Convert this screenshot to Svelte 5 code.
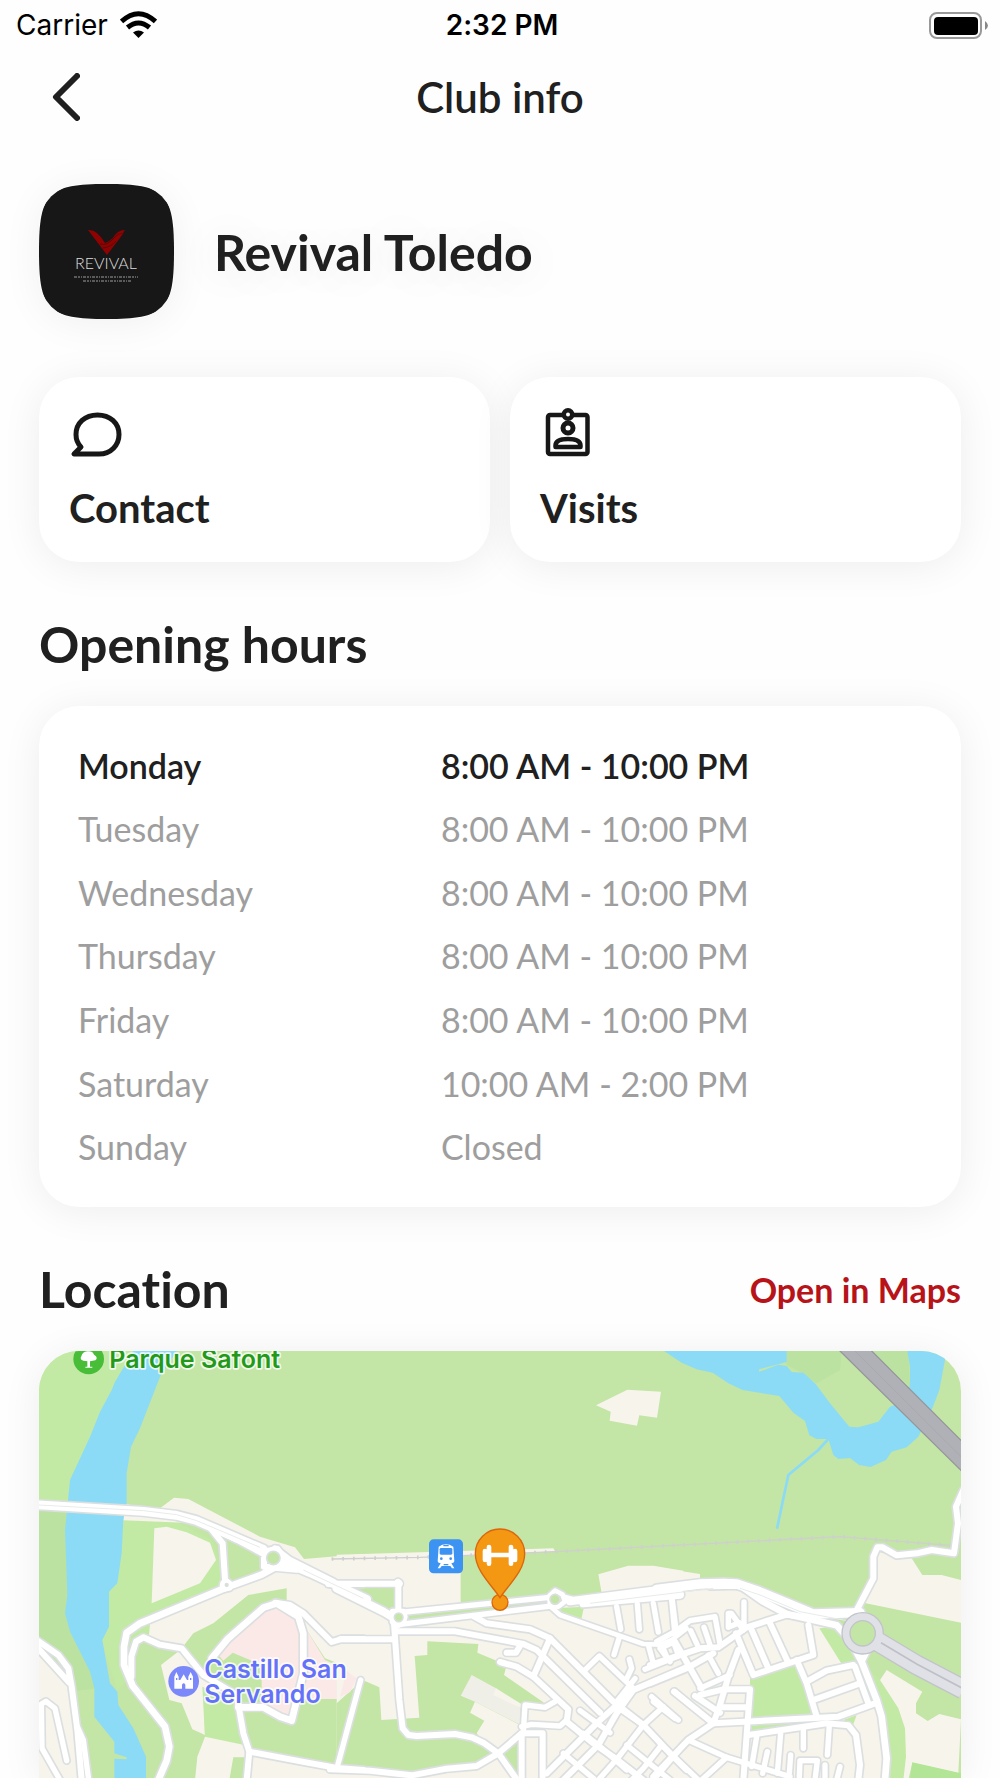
<script>
	const days = [
		{ name: 'Monday', hours: '8:00 AM - 10:00 PM' },
		{ name: 'Tuesday', hours: '8:00 AM - 10:00 PM' },
		{ name: 'Wednesday', hours: '8:00 AM - 10:00 PM' },
		{ name: 'Thursday', hours: '8:00 AM - 10:00 PM' },
		{ name: 'Friday', hours: '8:00 AM - 10:00 PM' },
		{ name: 'Saturday', hours: '10:00 AM - 2:00 PM' },
		{ name: 'Sunday', hours: 'Closed' }
	];
	let today = 'Monday';

	// The map is cut in three tiles, every path is relative to the left of its tile
	const tiles = [
		{
			x: 0,
			areas: [
				{ type: 'meadow', d: 'M27 33H310L120 420V490L27 480Z' },
				{ type: 'wood', d: 'M27 505H120V800L200 1045L140 1052L115 985L27 900Z' },
				{
					type: 'meadow',
					d: 'M270 540L440 545L545 600L590 740L357 850V890L320 900L300 1010L262 1050L215 900V755Z'
				},
				{ type: 'land', d: 'M280 490L340 503H392L432 473L475 477L690 590L795 622L822 657L735 684L500 550L280 541Z' },
				{ type: 'park', d: 'M560 575L735 640L695 700L590 740Z' },
				{
					type: 'land',
					d: 'M357 885L360 850L590 742L735 684L740 640L822 657L1000 642V1000L885 955L830 870L770 800V745L655 765L550 850L490 880L465 912L455 925L357 905Z'
				},
				{ type: 'park', d: 'M940 735H1000V775Z' },
				{ type: 'land', d: 'M373 565L410 560L470 577L540 608L558 660L510 730L365 790Z' },
				{
					type: 'land',
					d: 'M393 975L440 938L460 925L520 1005L620 1065L520 1050L525 1185L487 1168L455 1090L418 1080Z'
				},
				{ type: 'meadow', d: 'M517 1040L625 1090L645 1215L525 1190Z' },
				{ type: 'land', d: 'M525 1190L658 1218V1252H610L598 1320H495L502 1250Z' },
				{ type: 'land', d: 'M658 1240L1000 1300V1320H645Z' },
				{ type: 'land', d: 'M27 930L118 1028L155 1320H27Z' },
				{
					type: 'castle',
					d: 'M565 945L592 905L700 812L740 800L805 835L830 870L885 960L985 1005V1040L945 1077H800L780 1135L695 1090V975L608 938L580 962Z'
				},
				{
					type: 'water',
					d: 'M310 33H440L390 110L330 265L303 320L290 400V490L280 540L275 640L262 730L237 755V860L217 900L240 1030L262 1055L265 1095L310 1165L348 1250V1320H253V1256L290 1258V1252L253 1240V1205L193 1130V1045L180 995L120 875L105 820L112 765L105 570L120 420L180 290L210 215L245 150L255 125Z'
				}
			],
			roads: [
				{ w: 26, d: 'M0 493L340 514L440 526L500 542L700 628' },
				{ w: 26, d: 'M770 668L840 698L1010 778' },
				{ w: 16, d: 'M560 570L620 600L695 640' },
				{ w: 18, d: 'M540 562L578 610L586 732' },
				{ w: 18, d: 'M735 625L780 660L910 725' },
				{
					w: 20,
					d: 'M800 688L735 682L695 704L590 742L330 850L290 878L282 920V975L308 1038L405 1160L418 1220L410 1262L385 1320'
				},
				{
					w: 18,
					d: 'M304 1010V950L318 905L340 892L390 914L455 925L520 1005L620 1065L640 1180L658 1235L650 1320'
				},
				{
					w: 20,
					d: 'M545 955L592 898L700 803L740 790L805 830L820 880V1000L785 1142L750 1130L700 1102H625'
				},
				{ w: 18, d: 'M735 788L780 795L820 820L905 906L935 897H1000' },
				{ w: 18, d: 'M658 1235L800 1262L920 1284L1000 1290' },
				{ w: 16, d: 'M922 1280L992 1020' },
				{ w: 18, d: 'M20 900L85 945L115 985L125 1040L142 1170L155 1320M20 920L118 1028' },
				{ w: 16, d: 'M142 1160L160 1200L176 1320' },
				{ w: 16, d: 'M110 1262L75 1105L48 1084L34 1092L36 1225L90 1320' },
				{ w: 18, d: 'M702 680L702 655L715 632L742 626L758 648L752 672L730 682Z' },
				{ w: 18, d: 'M895 732H1000' },
				{ w: 14, d: 'M578 728L592 723L604 733L600 745L586 748L576 738Z' }
			]
		},
		{
			x: 960,
			areas: [
				{ type: 'land', d: 'M738 196L832 149L933 155L921 233L868 226L861 257L779 242L782 215Z' },
				{
					type: 'land',
					d: 'M-40 644L160 638L610 625L615 634L332 648V788L600 775L755 760L745 703L835 677H910L1000 692V1320H-40Z'
				},
				{ type: 'park', d: 'M160 828L600 783V792L170 850Z' },
				{ type: 'park', d: 'M-40 735H135V815L95 805L0 760Z' },
				{ type: 'meadow', d: 'M610 805L702 800L693 842L620 822Z' },
				{
					type: 'park',
					d: 'M232 904L385 912L382 938L470 975L462 1005L582 1088L525 1095L515 1165L445 1240L380 1278L185 1306L-40 1285V1090L38 1020L88 1042L94 1140L208 1133L194 948L232 945Z'
				},
				{ type: 'building', d: 'M365 1005L438 1045L512 1105V1155L375 1085L332 1067Z' },
				{ type: 'land', d: 'M438 1045L514 1092V1105L430 1065Z' },
				{
					type: 'land',
					d: 'M375 1085L510 1155L515 1172L445 1240L400 1208L380 1180L403 1142L360 1118Z'
				},
				{ type: 'park', d: 'M450 1245L512 1190V1320H495Z' },
				{ type: 'castle', d: 'M-10 993L20 1015L0 1057L-30 1070Z' }
			],
			roads: [
				{ w: 24, d: 'M-40 745L100 815L125 830' },
				{ w: 16, d: 'M165 816L600 772M150 853L620 796' },
				{ w: 24, d: 'M660 784L990 742M700 790L990 764' },
				{ w: 18, d: 'M-60 731H145M145 731V815' },
				{ w: 24, d: 'M144 729L146 731' },
				{ w: 18, d: 'M128 815H160L164 830L158 850L138 858L128 845Z' },
				{
					w: 18,
					d: 'M-30 898H132M132 850L148 1080L158 1165L175 1185L200 1188L315 1182L365 1192L400 1208L445 1240L500 1318'
				},
				{ w: 18, d: 'M-60 1288L60 1292L185 1306L290 1286L380 1278L445 1240L515 1180V1320M515 1180H578V1310' },
				{ w: 18, d: 'M140 874H315L520 912L560 930L600 970L750 1118' },
				{ w: 18, d: 'M370 828L410 850L540 868L600 895L790 1085L880 1155L965 1245L1010 1290' },
				{ w: 18, d: 'M600 895L550 1010M470 938H498L510 918' },
				{ w: 18, d: 'M450 966L500 980L550 1010L655 1108L650 1145L730 1210L800 1258L880 1320' },
				{ w: 16, d: 'M520 1175L525 1095L585 1102L615 1085M515 1160L545 1153L630 1158L650 1140' },
				{
					w: 14,
					d: 'M598 768L615 752L638 764L645 785L625 800L600 796ZM600 798L630 825L880 912L930 914L965 900L1010 865'
				},
				{ w: 16, d: 'M645 772L680 782' },
				{ w: 16, d: 'M800 800L812 868M862 792L868 868M910 790L925 876M965 780L975 885M808 892L792 944' },
				{ w: 16, d: 'M885 988L1010 938M895 915L910 970M935 915L950 950M970 905L985 945' },
				{ w: 18, d: 'M1010 982L850 1050L800 1120L745 1215L640 1320M850 1050L740 1150L590 1300' },
				{ w: 16, d: 'M705 990L748 948L850 1045M838 958L845 985L828 1020M855 1016L800 1085' },
				{
					w: 16,
					d: 'M690 1112L780 1178M640 1240L730 1315M700 1180L745 1215L830 1290M940 1100L880 1155L800 1258L745 1320M905 1070L985 1140M975 1055L1010 1085'
				},
				{ w: 16, d: 'M830 1215L960 1320M935 1215L880 1285L845 1320M1000 1215L910 1320M815 1110L880 1155' }
			]
		},
		{
			x: 1890,
			areas: [
				{ type: 'wood', d: 'M380 33H545L540 90L470 130L420 95L380 75ZM635 33H745L750 140Z' },
				{
					type: 'land',
					d: 'M-20 680L120 702V716H210L270 732L460 808L600 985L665 1130L680 1320H-20Z'
				},
				{ type: 'meadow', d: 'M478 865L530 860L600 980L545 972Z' },
				{ type: 'meadow', d: 'M610 970L660 1020L715 1105L735 1165L738 1250L730 1320H675L680 1250L665 1130Z' },
				{ type: 'land', d: 'M655 635L712 650L755 655L787 705H845L910 722V850L610 788L640 715Z' },
				{
					type: 'land',
					d: 'M680 990L787 1055L768 1090V1120L803 1143L838 1122L903 1138L895 1300L757 1268L745 1320H730L738 1250L735 1165L715 1105L660 1020Z'
				},
				{ type: 'lawn', d: 'M757 1267L903 1300V1320H750Z' },
				{ type: 'meadow', d: 'M270 1010L405 965L440 1030L470 1125L270 1140Z' },
				{ type: 'meadow', d: 'M265 1158L500 1135V1148L265 1175ZM550 1140L590 1125L578 1158Z' },
				{
					type: 'water',
					d: 'M12 33L65 68L110 88L158 98L205 130L248 150L358 168L400 218L435 243L448 286L470 297H505L520 345L535 357L570 354L597 375L632 381L678 360L695 335L740 322L775 290L815 210L838 150L855 60V33H742L750 80V130L740 180L690 200L655 245L595 262L568 260L510 190L465 130L430 98L395 96L380 78L355 74L298 95L297 88L380 66V33Z'
				}
			],
			roads: [
				{ w: 28, d: 'M-10 748L120 732L190 730L230 732L290 752L460 822L600 818' },
				{ w: 20, d: 'M150 738L240 736L310 785L380 822L530 856L570 900' },
				{
					w: 18,
					d: 'M585 820L640 715V650L652 622H668L710 646L770 640L815 630L882 640L894 550L888 500L910 450'
				},
				{
					w: 16,
					d: 'M35 765L48 870M-10 905L45 875L90 842L165 830L180 912M205 862V820H214L250 870M208 860L238 848M252 786V860'
				},
				{ w: 18, d: 'M-30 975L120 925L175 922L260 862L380 824L410 828' },
				{
					w: 18,
					d: 'M-30 1030L80 985L160 940M45 905L125 1045M235 930L205 1010L180 1095L160 1150L85 1200L-20 1310'
				},
				{
					w: 16,
					d: 'M92 872L112 915M132 862L150 915M0 925L30 965M45 905L0 925M145 945L175 1000M120 1045L210 1005'
				},
				{ w: 18, d: 'M228 880L280 1005L460 945L445 855M275 870L325 985M330 850L382 962M410 960L440 1030L470 1130' },
				{ w: 18, d: 'M440 1025L500 992L580 975M645 1090L535 1130L160 1150M460 1080L600 1030M585 980L625 1090' },
				{ w: 20, d: 'M570 900L605 965L650 1080L665 1130L680 1255L675 1320' },
				{ w: 18, d: 'M605 965L625 925' },
				{ w: 18, d: 'M42 1055L160 1150M105 1068L180 1118M120 1065L190 1048H270L250 1320M190 1102H262' },
				{ w: 18, d: 'M265 1185L500 1150L565 1156L588 1185L600 1275L595 1320' },
				{
					w: 16,
					d: 'M-20 1085L45 1135M85 1200L200 1252L390 1310M0 1210L115 1320M290 1190L275 1280M362 1180L352 1300M430 1165V1225M508 1155L502 1245'
				},
				{
					w: 16,
					d: 'M200 1252L125 1320M322 1235L308 1300M392 1245L388 1300M418 1310L420 1262H472L465 1320M495 1275V1320M540 1280L530 1320'
				}
			]
		}
	];

	const islands = [
		{ x: 730, y: 654, r: 20 },
		{ x: 1106, y: 832, r: 13 },
		{ x: 1575, y: 778, r: 15 },
		{ x: 590, y: 735, r: 4 }
	];
</script>

<svelte:head>
	<title>Club info</title>
</svelte:head>

<div class="app-container">
	<div class="status-bar">
		<div class="carrier">
			<span>Carrier</span>
			<svg width="37" height="28" viewBox="0 0 37 28" aria-hidden="true">
				<path d="M1.500 10.500Q18.500 -5 35.500 10.500" fill="none" stroke="#000" stroke-width="5" />
				<path d="M7.500 16.500Q18.500 7.500 29.500 16.500" fill="none" stroke="#000" stroke-width="5" />
				<path d="M18.500 27L13 21.500Q18.500 17.500 24 21.500Z" />
			</svg>
		</div>
		<span class="time">2:32 PM</span>
		<svg class="battery" width="59" height="27" viewBox="0 0 59 27" aria-hidden="true">
			<rect x="1" y="1" width="51" height="25" rx="7" fill="none" stroke="#999" stroke-width="2" />
			<rect x="5" y="5" width="44" height="18" rx="4" />
			<path d="M56 9Q62 13.500 56 18Z" fill="#888" />
		</svg>
	</div>

	<header class="app-header">
		<button class="back-button" aria-label="Back">
			<svg width="28" height="48" viewBox="0 0 28 48" aria-hidden="true">
				<path
					d="M25 3L4 24L25 45"
					fill="none"
					stroke="#202020"
					stroke-width="6"
					stroke-linecap="round"
					stroke-linejoin="round"
				/>
			</svg>
		</button>
		<h1>Club info</h1>
	</header>

	<main>
		<section class="club">
			<svg class="logo" width="135" height="135" viewBox="0 0 135 135" aria-hidden="true">
				<path
					d="M0 67.500C0 9 9 0 67.500 0S135 9 135 67.500S126 135 67.500 135S0 126 0 67.500Z"
					fill="#171717"
				/>
				<path d="M49 46Q58 45 66 59Q72 57 76 51Q80 46 86 46Q84 48 84 50L68 71Z" fill="#8f0202" />
				<path d="M61 60Q68 62 74 55T84 50M64 64Q72 63 77 57" fill="none" stroke="#5c0505" />
				<text class="logo-text" x="67" y="85">REVIVAL</text>
				<path
					d="M35 93H99M44 97H93"
					stroke="#5a5a5a"
					stroke-width="2"
					stroke-dasharray="3 1 2 1 1 1"
				/>
			</svg>
			<h2>Revival Toledo</h2>
		</section>

		<section class="actions">
			<button class="card action">
				<svg width="54" height="52" viewBox="-1 -4 54 52" aria-hidden="true">
					<path
						d="M4 43H29C41 43 49 34 49 23.500C49 12 40 4 27.500 4S6 12 6 23.500C6 29 8 33 11 36Z"
						fill="none"
						stroke="#171717"
						stroke-width="5"
						stroke-linejoin="round"
					/>
				</svg>
				<span>Contact</span>
			</button>
			<button class="card action">
				<svg width="54" height="52" viewBox="0 0 54 52" aria-hidden="true">
					<circle cx="28" cy="7.500" r="6.500" fill="#171717" />
					<g fill="none" stroke="#171717" stroke-width="4.500">
						<rect x="8" y="8" width="39.500" height="39" rx="2" />
						<circle cx="28" cy="21" r="5" stroke-width="5" />
						<path
							d="M15.500 40V38.500C15.500 34 21 32 28 32S40.500 34 40.500 38.500V40Z"
							stroke-linejoin="round"
						/>
					</g>
					<circle cx="28" cy="7.500" r="2" fill="#fff" />
				</svg>
				<span>Visits</span>
			</button>
		</section>

		<section>
			<div class="section-title">
				<h2>Opening hours</h2>
			</div>
			<div class="card hours">
				<table>
					<tbody>
						{#each days as day}
							<tr class:today={day.name === today}>
								<th scope="row">{day.name}</th>
								<td>{day.hours}</td>
							</tr>
						{/each}
					</tbody>
				</table>
			</div>
		</section>

		<section>
			<div class="section-title">
				<h2>Location</h2>
				<a href="#map">Open in Maps</a>
			</div>
			<div class="card map" id="map">
				<svg viewBox="27 33 2766 1281" role="img" aria-label="Map">
					<rect class="park" x="27" y="33" width="2766" height="1281" />

					{#each tiles as tile}
						<g transform="translate({tile.x} 0)">
							{#each tile.areas as area}
								<path class={area.type} d={area.d} />
							{/each}
						</g>
					{/each}

					<path class="stream" d="M2395 297L2365 330L2275 405L2241 566" />

					<!-- railway -->
					<path class="rail" d="M905 657L1170 652L1575 635L2430 590L2770 617" />
					<path class="rail ties" d="M905 657L1170 652L1575 635L2430 590L2770 617" />

					<!-- all the casings go under all the roads, so crossings stay open -->
					{#each ['casing', 'road'] as layer}
						{#each tiles as tile}
							<g class={layer} transform="translate({tile.x} 0)">
								{#each tile.roads as road}
									<path d={road.d} stroke-width={layer === 'casing' ? road.w + 10 : road.w} />
								{/each}
							</g>
						{/each}
					{/each}

					{#each islands as island}
						<circle class="island" cx={island.x} cy={island.y} r={island.r} />
					{/each}

					<!-- lane dividers -->
					<g class="divider">
						<path d="M27 495L340 512L440 524L500 542L690 622M820 690L1000 775" />
						<path d="M1680 790L1950 757L2050 745M2130 745L2190 765L2310 815L2450 842" />
					</g>

					<!-- motorway and ring road -->
					<path class="motorway" d="M2427 30H2522L2800 308V398Z" />
					<path d="M2475 33L2793 350" fill="none" stroke="#a5a6ab" stroke-width="2" />
					<g fill="none">
						<path d="M2535 900L2660 975L2800 1048" stroke="#c2c4ca" stroke-width="62" />
						<circle cx="2498" cy="880" r="49" stroke="#c2c4ca" stroke-width="30" />
						<path d="M2535 900L2660 975L2800 1048" stroke="#e0e1e6" stroke-width="54" />
						<circle cx="2498" cy="880" r="49" stroke="#e0e1e6" stroke-width="22" />
						<path d="M2553 908L2660 972L2800 1046" stroke="#bfc0c5" stroke-width="5" />
					</g>
					<circle cx="2498" cy="880" r="38" fill="#c3e5a5" stroke="#c2c4ca" stroke-width="4" />

					<!-- park -->
					<circle cx="176" cy="57" r="46" fill="#47bd38" />
					<path
						d="M172 64L160 62Q148 58 154 49Q157 35 172 34Q188 32 192 44Q206 52 196 61L180 64V80H187V83H166V80H172Z"
						fill="#fff"
					/>
					<text class="label park-label" x="238" y="84">Parque Safont</text>

					<!-- castle -->
					<circle cx="461" cy="1024" r="46" fill="#7b88fa" />
					<path
						d="M433 1046V1010L439 996L446 1010V1020H451L461 1003L471 1020H475V1010L482 996L489 1010V1046H466V1034Q461 1026 456 1034V1046Z"
						fill="#fff"
					/>
					<path d="M440 1014V1020M482 1014V1020" stroke="#7b88fa" stroke-width="4" />
					<text class="label castle-label">
						<tspan x="523" y="1015">Castillo San</tspan>
						<tspan x="523" y="1090">Servando</tspan>
					</text>

					<!-- train station -->
					<rect x="1197" y="598" width="102" height="102" rx="14" fill="#3c93f2" />
					<path
						d="M1226 620Q1248 606 1270 620L1273 664Q1272 670 1264 670L1273 685H1266L1261 678H1235L1230 685H1223L1232 670Q1224 670 1223 664Z"
						fill="#fff"
					/>
					<rect x="1229" y="624" width="38" height="20" rx="4" fill="#3c93f2" />
					<path d="M1240 617H1256M1241 674H1255" stroke="#3c93f2" stroke-width="4" />
					<circle cx="1234" cy="656" r="4" fill="#3c93f2" />
					<circle cx="1262" cy="656" r="4" fill="#3c93f2" />

					<!-- club pin -->
					<g fill="#f49712" stroke="#dc660c" stroke-width="4">
						<circle cx="1410" cy="787" r="24" />
						<path d="M1410 773C1385 735 1336 692 1336 641A74 74 0 0 1 1484 641C1484 692 1435 735 1410 773Z" />
					</g>
					<path
						d="M1380 645H1440M1377 621V671M1443 621V671M1365 633V660M1455 633V660"
						stroke="#fff"
						stroke-width="14"
						stroke-linecap="round"
					/>
				</svg>
			</div>
		</section>
	</main>
</div>

<style>
	:global(body) {
		margin: 0;
		background-color: #fefefe;
		color: #202020;
		font-family: Lato, 'Open Sans', sans-serif;
		font-variant-ligatures: none;
		overflow-x: hidden;
	}

	.status-bar {
		display: grid;
		grid-template-columns: 1fr auto 1fr;
		align-items: center;
		height: 50px;
		padding: 0 12px 0 16px;
		color: #000;
		font-family: Inter, sans-serif;
		font-size: 28px;
		line-height: 32px;
	}

	.carrier {
		display: flex;
		align-items: center;
		gap: 12px;
	}

	.time {
		font-weight: 600;
	}

	.battery {
		justify-self: end;
	}

	.app-header {
		display: grid;
		grid-template-columns: 1fr auto 1fr;
		align-items: center;
		height: 94px;
		padding: 0 40px;
	}

	.back-button {
		display: flex;
		justify-self: start;
		padding: 12px;
		border: none;
		background: transparent;
		cursor: pointer;
	}

	h1 {
		margin: 0;
		font-size: 42px;
		font-weight: 600;
		line-height: 48px;
	}

	h2 {
		margin: 0;
		font-size: 50px;
		font-weight: 700;
		line-height: 56px;
	}

	main {
		padding: 40px 39px 0;
	}

	.club {
		display: flex;
		align-items: center;
		gap: 40px;
		margin-bottom: 58px;
	}

	.club h2 {
		text-shadow: 0 4px 40px rgba(0, 0, 0, 0.1);
	}

	.logo {
		border-radius: 42px;
		box-shadow: 0 4px 40px rgba(0, 0, 0, 0.06);
	}

	.logo-text {
		fill: #ddd;
		font-size: 16px;
		font-weight: 300;
		text-anchor: middle;
	}

	.card {
		border-radius: 40px;
		background-color: #fff;
		box-shadow: 0 4px 40px rgba(0, 0, 0, 0.07);
	}

	.actions {
		display: grid;
		grid-template-columns: 1fr 1fr;
		gap: 20px;
	}

	.action {
		display: flex;
		flex-direction: column;
		align-items: flex-start;
		gap: 25px;
		padding: 30px;
		border: none;
		color: inherit;
		font-family: inherit;
		font-size: 40px;
		font-weight: 700;
		line-height: 48px;
		cursor: pointer;
	}

	.section-title {
		display: flex;
		align-items: center;
		justify-content: space-between;
		padding: 54px 0 34px;
	}

	.section-title a {
		color: #b71318;
		font-size: 34px;
		font-weight: 700;
		text-decoration: none;
	}

	.hours {
		padding: 28px 39px;
	}

	table {
		width: 100%;
		height: 445px;
		border-collapse: collapse;
		color: #9e9e9e;
		font-size: 34px;
		line-height: 40px;
	}

	th,
	td {
		padding: 0;
		font-weight: 400;
		text-align: left;
	}

	th {
		width: 43%;
	}

	.today th,
	.today td {
		color: #202020;
		font-weight: 600;
	}

	.map {
		overflow: hidden;
		border-radius: 40px 40px 0 0;
	}

	.map svg {
		display: block;
		width: 100%;
	}

	.park {
		fill: #c3e5a5;
	}

	.meadow {
		fill: #c3eaa5;
	}

	.wood {
		fill: #bbe2a0;
	}

	.lawn {
		fill: #b2e596;
	}

	.land {
		fill: #f7f4eb;
	}

	.building {
		fill: #efefe8;
	}

	.castle {
		fill: #fbe9e7;
	}

	.water {
		fill: #8cdbf6;
	}

	.stream {
		fill: none;
		stroke: #8cdbf6;
		stroke-width: 8;
	}

	.rail {
		fill: none;
		stroke: #cfcfcf;
		stroke-width: 4;
	}

	.ties {
		stroke-width: 11;
		stroke-dasharray: 5 27;
	}

	.casing path,
	.road path {
		fill: none;
		stroke-linecap: round;
		stroke-linejoin: round;
	}

	.casing path {
		stroke: #dcdfe0;
	}

	.road path {
		stroke: #fff;
	}

	.island {
		fill: #c3e5a5;
		stroke: #dcdfe0;
		stroke-width: 5;
	}

	.divider {
		fill: none;
		stroke: #e9ebeb;
		stroke-width: 3;
	}

	.motorway {
		fill: #b0b1b6;
		stroke: #96979c;
		stroke-width: 4;
	}

	.label {
		font-family: Inter, sans-serif;
		font-size: 75px;
		font-weight: 600;
		paint-order: stroke;
		stroke: #fff;
		stroke-opacity: 0.8;
		stroke-width: 10;
		stroke-linejoin: round;
	}

	.park-label {
		fill: #23991a;
	}

	.castle-label {
		fill: #6472fa;
	}
</style>
